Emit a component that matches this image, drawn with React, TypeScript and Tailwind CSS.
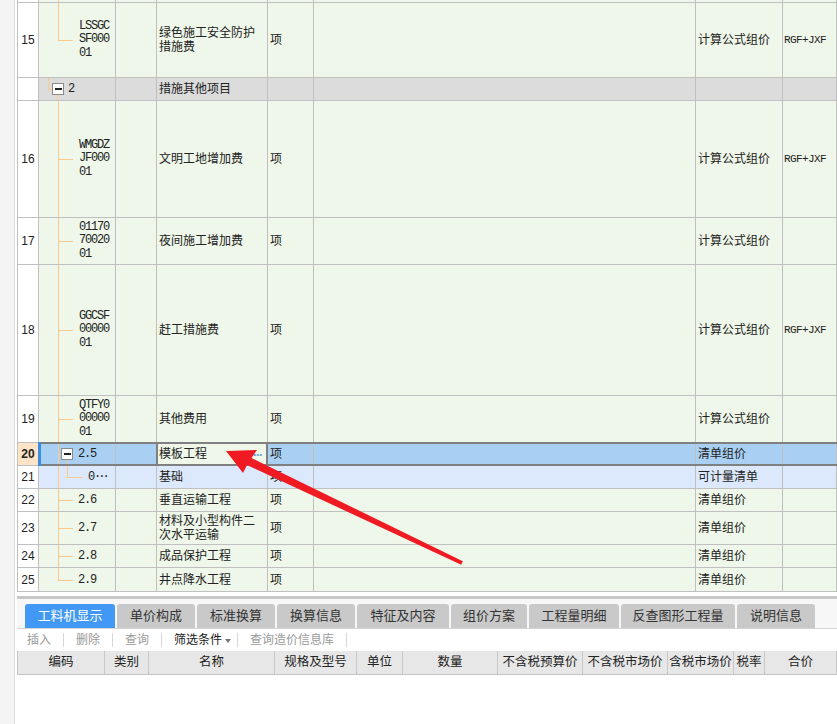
import React from "react";

const GREEN = "bg-[#eef7e9]";
const GRAY = "bg-[#dcdcdc]";
const SEL = "bg-[#a9d0f3]";
const SUB = "bg-[#dce8fb]";

function Cell({
  w,
  bg = GREEN,
  className = "",
  children,
}: {
  w: string;
  bg?: string;
  className?: string;
  children?: React.ReactNode;
}) {
  return (
    <div
      className={`${w} ${bg} relative flex h-full shrink-0 items-center border-r border-b border-[#c0c0c0] ${className}`}
    >
      {children}
    </div>
  );
}

// tree connector pieces
const V = ({ c }: { c: string }) => <div className={`absolute w-px bg-[#fcc98a] ${c}`} />;
const H = ({ c }: { c: string }) => <div className={`absolute top-1/2 h-px bg-[#fcc98a] ${c}`} />;

function Box({ c }: { c: string }) {
  return (
    <div
      className={`absolute top-1/2 flex h-[12px] w-[12px] -translate-y-1/2 items-center justify-center border border-[#8a8a8a] bg-white ${c}`}
    >
      <div className="h-[1.5px] w-[7px] bg-[#222]" />
    </div>
  );
}

const mono = "font-['Liberation_Mono',monospace] text-[12px] tracking-[-1.2px] text-[#222]";

function Code({ lines }: { lines: string[] }) {
  return (
    <div className={`relative pl-[40px] leading-[13.5px] ${mono}`}>
      {lines.map((l) => (
        <div key={l}>{l}</div>
      ))}
    </div>
  );
}

type RowProps = {
  h: string;
  num?: string;
  tree?: React.ReactNode;
  name?: React.ReactNode;
  unit?: string;
  type?: string;
  last?: string;
  bg?: string;
};

function Row({ h, num = "", tree, name, unit = "", type = "", last = "", bg = GREEN }: RowProps) {
  return (
    <div className={`flex ${h}`}>
      <Cell w="w-[21px]" bg="bg-white" className="justify-center text-[12px]">
        {num}
      </Cell>
      <Cell w="w-[77px]" bg={bg}>
        {tree}
      </Cell>
      <Cell w="w-[41px]" bg={bg} />
      <Cell w="w-[111px]" bg={bg} className="pl-[2px] text-[12px] leading-[14px]">
        {name}
      </Cell>
      <Cell w="w-[46px]" bg={bg} className="pl-[2px] text-[12px]">
        {unit}
      </Cell>
      <Cell w="w-[382px]" bg={bg} />
      <Cell w="w-[87px]" bg={bg} className="pl-[2px] text-[12px]">
        {type}
      </Cell>
      <Cell
        w="min-w-0 flex-1"
        bg={bg}
        className="pl-[1px] font-['Liberation_Mono',monospace] text-[11px] tracking-[-0.6px]"
      >
        {last}
      </Cell>
    </div>
  );
}

function Leaf({ text, last = false }: { text: string; last?: boolean }) {
  return (
    <>
      <V c={last ? "left-[19px] top-0 h-1/2" : "left-[19px] top-0 bottom-0"} />
      <H c="left-[19px] w-[15px]" />
      <div className={`relative pl-[39px] ${mono}`}>{text}</div>
    </>
  );
}

const tabs = [
  { t: "工料机显示", w: "w-[90px]", on: true },
  { t: "单价构成", w: "w-[78px]" },
  { t: "标准换算", w: "w-[78px]" },
  { t: "换算信息", w: "w-[78px]" },
  { t: "特征及内容", w: "w-[92px]" },
  { t: "组价方案", w: "w-[76px]" },
  { t: "工程量明细", w: "w-[90px]" },
  { t: "反查图形工程量", w: "w-[114px]" },
  { t: "说明信息", w: "w-[78px]" },
];

const heads = [
  { t: "编码", w: "w-[87px]" },
  { t: "类别", w: "w-[44px]" },
  { t: "名称", w: "w-[126px]" },
  { t: "规格及型号", w: "w-[82px]" },
  { t: "单位", w: "w-[46px]" },
  { t: "数量", w: "w-[95px]" },
  { t: "不含税预算价", w: "w-[85px]" },
  { t: "不含税市场价", w: "w-[85px]" },
  { t: "含税市场价", w: "w-[66px]" },
  { t: "税率", w: "w-[31px]" },
  { t: "合价", w: "w-[72px]" },
];

const Sep = () => <div className="h-[14px] w-px bg-[#d6d6d6]" />;

export default function App() {
  return (
    <div className="relative flex h-[724px] w-[837px] overflow-hidden bg-white font-['Liberation_Sans','Noto_Sans_CJK_SC',sans-serif] text-[#222]">
      <div className="w-[15px] shrink-0 border-r border-[#dcdcdc] bg-[#f4f4f4]" />
      <div className="flex min-w-0 flex-1 flex-col pl-[2px]">
        {/* Grid */}
        <div className="flex flex-col border-l border-[#c0c0c0]">
          <Row h="h-[3px]" tree={<V c="left-[19px] top-0 bottom-0" />} />
          <Row
            h="h-[75px]"
            num="15"
            tree={
              <>
                <V c="left-[19px] top-0 h-1/2" />
                <H c="left-[19px] w-[15px]" />
                <Code lines={["LSSGC", "SF000", "01"]} />
              </>
            }
            name={
              <span>
                绿色施工安全防护
                <br />
                措施费
              </span>
            }
            unit="项"
            type="计算公式组价"
            last="RGF+JXF"
          />
          <Row
            h="h-[23px]"
            bg={GRAY}
            tree={
              <>
                <V c="left-[9px] top-0 h-1/2" />
                <H c="left-[9px] w-[4px]" />
                <Box c="left-[13px]" />
                <V c="left-[18px] top-[calc(50%+6px)] bottom-0" />
                <div className={`relative pl-[29px] ${mono}`}>2</div>
              </>
            }
            name="措施其他项目"
          />
          <Row
            h="h-[117px]"
            num="16"
            tree={
              <>
                <V c="left-[19px] top-0 bottom-0" />
                <H c="left-[19px] w-[15px]" />
                <Code lines={["WMGDZ", "JF000", "01"]} />
              </>
            }
            name="文明工地增加费"
            unit="项"
            type="计算公式组价"
            last="RGF+JXF"
          />
          <Row
            h="h-[47px]"
            num="17"
            tree={
              <>
                <V c="left-[19px] top-0 bottom-0" />
                <H c="left-[19px] w-[15px]" />
                <Code lines={["01170", "70020", "01"]} />
              </>
            }
            name="夜间施工增加费"
            unit="项"
            type="计算公式组价"
          />
          <Row
            h="h-[131px]"
            num="18"
            tree={
              <>
                <V c="left-[19px] top-0 bottom-0" />
                <H c="left-[19px] w-[15px]" />
                <Code lines={["GGCSF", "00000", "01"]} />
              </>
            }
            name="赶工措施费"
            unit="项"
            type="计算公式组价"
            last="RGF+JXF"
          />
          <Row
            h="h-[47px]"
            num="19"
            tree={
              <>
                <V c="left-[19px] top-0 bottom-0" />
                <H c="left-[19px] w-[15px]" />
                <Code lines={["QTFY0", "00000", "01"]} />
              </>
            }
            name="其他费用"
            unit="项"
            type="计算公式组价"
          />
          {/* selected row 20 */}
          <div className="relative flex h-[23px]">
            <Cell w="w-[21px]" bg="bg-[#fde4c6]" className="justify-center text-[12px] font-bold">
              20
            </Cell>
            <Cell w="w-[77px]" bg={SEL}>
              <V c="left-[19px] top-0 bottom-0" />
              <H c="left-[19px] w-[3px]" />
              <Box c="left-[22px]" />
              <V c="left-[28px] top-[calc(50%+6px)] bottom-0" />
              <div className={`relative pl-[39px] ${mono}`}>2.5</div>
              <div className="absolute top-[-1px] bottom-[-1px] left-[-1px] z-10 w-[3px] bg-[#3b8de0]" />
            </Cell>
            <Cell w="w-[41px]" bg={SEL} />
            <Cell w="w-[111px]" bg={GREEN} className="pl-[2px] text-[12px]">
              模板工程
              <span className="absolute right-[5px] top-[3px] text-[12px] font-bold tracking-[-1px] text-[#5a9fd6]">
                ···
              </span>
              <div className="absolute top-0 right-[-1px] bottom-0 left-[-1px] border-x-2 border-[#808080]" />
            </Cell>
            <Cell w="w-[46px]" bg={SEL} className="pl-[2px] text-[12px]">
              项
            </Cell>
            <Cell w="w-[382px]" bg={SEL} />
            <Cell w="w-[87px]" bg={SEL} className="pl-[2px] text-[12px]">
              清单组价
            </Cell>
            <Cell w="min-w-0 flex-1" bg={SEL} />
            <div className="pointer-events-none absolute top-[-1px] right-0 left-[21px] h-[24px] border-y-2 border-[#808080]" />
          </div>
          <Row
            h="h-[23px]"
            num="21"
            bg={SUB}
            tree={
              <>
                <V c="left-[19px] top-0 bottom-0" />
                <V c="left-[28px] top-0 h-1/2" />
                <H c="left-[28px] w-[16px]" />
                <div className={`relative pl-[49px] ${mono}`}>
                  0<span className="tracking-[-3px]">···</span>
                </div>
              </>
            }
            name="基础"
            unit="项"
            type="可计量清单"
          />
          <Row h="h-[23px]" num="22" tree={<Leaf text="2.6" />} name="垂直运输工程" unit="项" type="清单组价" />
          <Row
            h="h-[33px]"
            num="23"
            tree={<Leaf text="2.7" />}
            name={
              <span>
                材料及小型构件二
                <br />
                次水平运输
              </span>
            }
            unit="项"
            type="清单组价"
          />
          <Row h="h-[23px]" num="24" tree={<Leaf text="2.8" />} name="成品保护工程" unit="项" type="清单组价" />
          <Row h="h-[24px]" num="25" tree={<Leaf text="2.9" last />} name="井点降水工程" unit="项" type="清单组价" />
        </div>

        {/* Bottom panel */}
        <div className="h-[4px]" />
        <div className="h-[3px] bg-[#c8c8c8]" />
        <div className="flex h-[30px] items-end gap-[2px] border-b border-[#d4d4d4] bg-[#f7f7f7] pl-[8px]">
          {tabs.map((t) => (
            <div
              key={t.t}
              className={`${t.w} flex h-[24px] items-center justify-center rounded-t-[3px] text-[13px] ${
                t.on ? "bg-[#4299f5] text-white" : "bg-[#c9c9c9] text-[#333]"
              }`}
            >
              {t.t}
            </div>
          ))}
        </div>
        <div className="flex h-[22px] items-center gap-[12px] pl-[10px] text-[12px] text-[#9a9a9a]">
          <span>插入</span>
          <Sep />
          <span>删除</span>
          <Sep />
          <span>查询</span>
          <Sep />
          <span className="-mr-[6px] flex items-center gap-[3px] text-[#1a1a1a]">
            筛选条件
            <span className="mt-[1px] h-0 w-0 border-x-[3px] border-t-[4px] border-x-transparent border-t-[#777]" />
          </span>
          <Sep />
          <span>查询造价信息库</span>
          <Sep />
        </div>
        <div className="flex h-[24px] border-b border-l border-[#c4c4c4] bg-[#e7e7e7]">
          {heads.map((c) => (
            <div
              key={c.t}
              className={`${c.w} flex shrink-0 items-center justify-center border-r border-[#c8c8c8] text-[12.5px] text-[#222]`}
            >
              {c.t}
            </div>
          ))}
        </div>
      </div>

      {/* red annotation arrow */}
      <svg className="pointer-events-none absolute inset-0" width="837" height="724" viewBox="0 0 837 724">
        <polygon
          points="226,451 257,450 251.5,458 462.8,561.3 461.2,564.7 247,465 243,473"
          fill="#ef1a22"
        />
      </svg>
    </div>
  );
}
